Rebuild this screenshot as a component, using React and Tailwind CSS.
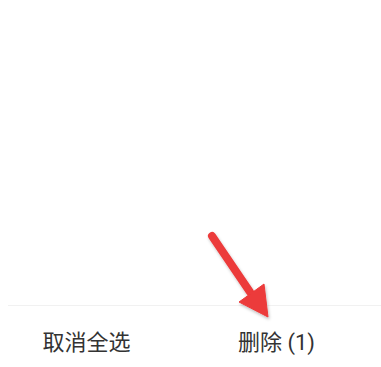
export default function App() {
  return (
    <div className="relative w-[381px] h-[367px] bg-white overflow-hidden flex flex-col font-['Roboto','Noto_Sans_CJK_SC',sans-serif]">
      {/* empty list area */}
      <div className="h-[305px] shrink-0" />

      {/* bottom action bar */}
      <div className="ml-[8px] h-px bg-[#f1f1f1] shrink-0" />
      <div className="flex pt-[22px] text-[22px] leading-[30px] text-[#333333]">
        <button type="button" className="w-[173px] text-center">取消全选</button>
        <button type="button" className="w-[207px] text-center">删除 (1)</button>
      </div>

      {/* annotation arrow */}
      <svg className="absolute left-0 top-0 pointer-events-none" width="381" height="367" viewBox="0 0 381 367">
        <defs>
          <filter id="shadow" x="-20%" y="-20%" width="140%" height="140%">
            <feDropShadow dx="1" dy="2" stdDeviation="1.5" floodColor="#000" floodOpacity="0.25" />
          </filter>
        </defs>
        <g filter="url(#shadow)" fill="#ec3a3a" stroke="#ec3a3a">
          <line x1="212" y1="236" x2="250" y2="292" strokeWidth="8" strokeLinecap="round" />
          <polygon points="239,302 264,284 268,317" strokeWidth="1" strokeLinejoin="round" />
        </g>
      </svg>
    </div>
  );
}
